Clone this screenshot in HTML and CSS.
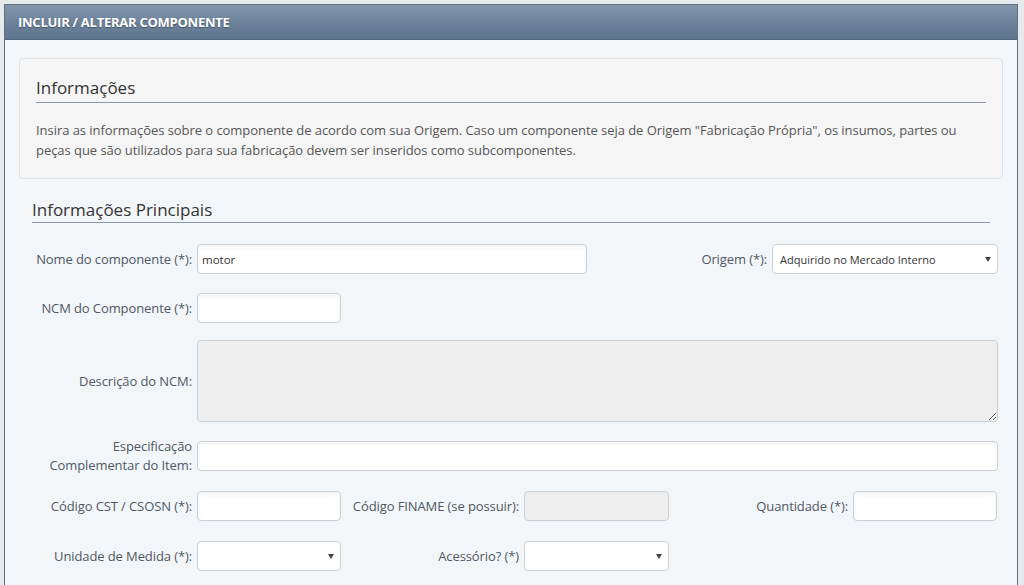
FILE: index.html
```html
<!DOCTYPE html>
<html lang="pt-BR">
<head>
<meta charset="utf-8">
<title>Incluir / Alterar Componente</title>
<link rel="stylesheet" href="styles.css">
</head>
<body>
<div class="panel">
  <div class="panel-header">INCLUIR / ALTERAR COMPONENTE</div>
  <div class="panel-body">
    <div class="well">
      <h3 class="section-title">Informações</h3>
      <p class="well-text">Insira as informações sobre o componente de acordo com sua Origem. Caso um componente seja de Origem "Fabricação Própria", os insumos, partes ou peças que são utilizados para sua fabricação devem ser inseridos como subcomponentes.</p>
    </div>
    <div class="section">
      <h3 class="section-title">Informações Principais</h3>
      <div class="form">
        <div class="row row-name">
          <label class="lbl">Nome do componente (*):</label>
          <input class="ctl" type="text" value="motor">
          <label class="lbl">Origem (*):</label>
          <span class="sel"><span class="sel-text">Adquirido no Mercado Interno</span></span>
        </div>
        <div class="row row-short">
          <label class="lbl">NCM do Componente (*):</label>
          <input class="ctl" type="text">
        </div>
        <div class="row row-wide row-ta">
          <label class="lbl">Descrição do NCM:</label>
          <textarea class="ctl ta" disabled></textarea>
        </div>
        <div class="row row-wide">
          <label class="lbl lbl-2">Especificação<br>Complementar do Item:</label>
          <input class="ctl" type="text">
        </div>
        <div class="row row-six">
          <label class="lbl">Código CST / CSOSN (*):</label>
          <input class="ctl" type="text">
          <label class="lbl">Código FINAME (se possuir):</label>
          <input class="ctl" type="text" disabled>
          <label class="lbl">Quantidade (*):</label>
          <input class="ctl" type="text">
        </div>
        <div class="row row-six">
          <label class="lbl">Unidade de Medida (*):</label>
          <span class="sel"><span class="sel-text"></span></span>
          <label class="lbl">Acessório? (*)</label>
          <span class="sel"><span class="sel-text"></span></span>
        </div>
      </div>
    </div>
  </div>
</div>
</body>
</html>
```

FILE: styles.css
```css
html, body {
  margin: 0;
  padding: 0;
}
body {
  background: #e7eaed;
  font-family: "Open Sans", "Noto Sans", Arial, sans-serif;
  color: #555;
  height: 585px;
  overflow: hidden;
}
.panel {
  margin: 4px 6px 0 4px;
  border: 1px solid #61707f;
  border-bottom: none;
  background: #f3f6f9;
  height: 600px;
}
.panel-header {
  height: 35px;
  box-sizing: border-box;
  padding: 0 13px;
  display: flex;
  align-items: center;
  background: linear-gradient(#8296ab, #6a8098 60%, #5f768f);
  color: #fff;
  font-weight: 700;
  font-size: 13px;
  letter-spacing: -0.25px;
  text-shadow: 0 1px 1px rgba(0, 0, 0, 0.35);
  border-bottom: 1px solid #56697d;
}
.panel-body {
  padding: 18px 14px 0 14px;
}
.well {
  background: #f5f5f5;
  border: 1px solid #e1e3e5;
  border-radius: 4px;
  padding: 18px 16px 18px 16px;
}
.section-title {
  margin: 0;
  font-size: 17px;
  line-height: 22px;
  font-weight: 400;
  color: #333;
  padding-bottom: 3px;
  border-bottom: 1px solid #8d99a6;
}
.well-text {
  margin: 17px 0 0 0;
  font-size: 13px;
  line-height: 20px;
  letter-spacing: -0.05px;
  color: #555;
}
.section {
  padding: 20px 13px 0 13px;
}
.section .section-title {
  padding-bottom: 1px;
}
.form {
  display: flex;
  flex-direction: column;
  gap: 19px;
  padding-top: 21px;
  margin-right: -8px;
}
.row {
  display: grid;
  column-gap: 5px;
  align-items: center;
}
.row-name {
  grid-template-columns: 160px 390px 1fr 226px;
}
.row-short {
  grid-template-columns: 160px 144px;
}
.row-wide {
  grid-template-columns: 160px 1fr;
}
.row-ta {
  margin-top: -2px;
}
.row-six {
  grid-template-columns: 160px 144px 173px 145px 174px 144px;
  margin-top: 1px;
}
.lbl {
  text-align: right;
  font-size: 13px;
  line-height: 19px;
  letter-spacing: -0.1px;
  color: #4f5864;
  white-space: nowrap;
}
.lbl-2 {
  margin: -4px 0;
}
.ctl {
  box-sizing: border-box;
  height: 30px;
  width: 100%;
  margin: 0;
  border: 1px solid #ccd0d4;
  border-radius: 4px;
  background: #fff;
  box-shadow: inset 0 3px 5px rgba(0, 0, 0, 0.045);
  padding: 0 4px;
  font-family: inherit;
  font-size: 11.5px;
  color: #333;
  outline: none;
}
.ctl:disabled {
  background: #eee;
  box-shadow: none;
}
.ta {
  height: 82px;
  resize: vertical;
}
.sel {
  position: relative;
  box-sizing: border-box;
  height: 30px;
  display: flex;
  align-items: center;
  border: 1px solid #ccd0d4;
  border-radius: 4px;
  background: #fff;
  padding: 0 20px 0 7px;
  font-size: 11px;
  color: #333;
}
.sel::after {
  content: "";
  position: absolute;
  right: 6px;
  top: 12px;
  border-left: 3px solid transparent;
  border-right: 3px solid transparent;
  border-top: 5px solid #444;
}
```
